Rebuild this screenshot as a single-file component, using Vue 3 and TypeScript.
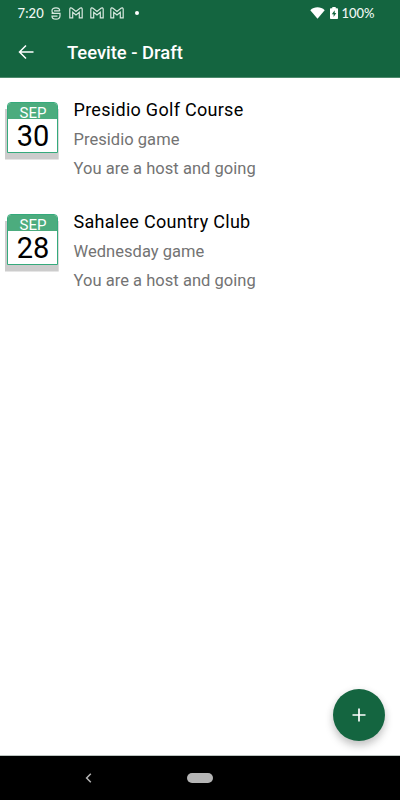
<script setup lang="ts">
interface Invite {
  month: string
  day: number
  course: string
  game: string
  status: string
}

const invites: Invite[] = [
  { month: 'SEP', day: 30, course: 'Presidio Golf Course', game: 'Presidio game', status: 'You are a host and going' },
  { month: 'SEP', day: 28, course: 'Sahalee Country Club', game: 'Wednesday game', status: 'You are a host and going' },
]
</script>

<template>
  <div class="screen">
    <header class="top">
      <div class="status">
        <span class="time">7:20</span>
        <svg class="s-icon" width="10" height="13" viewBox="0 0 10 13">
          <path d="M8.800 3.700C8.600 1.800 7 .8 5 .8S1 1.800 1 3.700 2 6.400 3.500 6.400H9V8.800C9 11 7.300 12.200 5 12.200S1 11 1 9.200H6.500M3 3.800H8.800M.6 6.400H4" />
        </svg>
        <svg v-for="n in 3" :key="n" class="mail" width="14" height="12" viewBox="0 0 14 12">
          <path d="M.8 10.800V2.200C.8.8 2.100.5 3 1.200L7 4.500 11 1.200C11.900.5 13.200.8 13.200 2.200V10.800H10.300V5.300L7 8 3.700 5.300V10.800Z" />
        </svg>
        <span class="dot"></span>
        <span class="grow"></span>
        <svg class="wifi" width="15" height="12" viewBox="0 0 15 12">
          <path d="M.3 3.200C4.300-.6 10.700-.6 14.700 3.200L7.500 11.800Z" />
        </svg>
        <svg class="battery" width="8" height="12" viewBox="0 0 8 12">
          <path class="cell" d="M2.300 0H5.700V1.200H7.200Q8 1.200 8 2V11.200Q8 12 7.200 12H.8Q0 12 0 11.200V2Q0 1.200.8 1.200H2.300Z" />
          <path class="bolt" d="M4.700 3.200L1.800 7.200H3.600V10L6.300 6H4.700Z" />
        </svg>
        <span class="percent">100%</span>
      </div>
      <div class="bar">
        <svg class="back" width="16" height="16" viewBox="0 0 16 16">
          <path d="M15.500 8H1.600M8 1.500L1.500 8 8 14.500" />
        </svg>
        <h1>Teevite - Draft</h1>
      </div>
    </header>

    <main>
      <article v-for="invite in invites" :key="invite.day" class="invite">
        <div class="calendar">
          <div class="sheet">
            <div class="month">{{ invite.month }}</div>
            <div class="day">{{ invite.day }}</div>
          </div>
        </div>
        <div class="details">
          <h2>{{ invite.course }}</h2>
          <p>{{ invite.game }}</p>
          <p>{{ invite.status }}</p>
        </div>
      </article>
    </main>

    <button class="fab" aria-label="Add">
      <svg width="14" height="14" viewBox="0 0 14 14"><path d="M7 .5V13.500M.5 7H13.500" /></svg>
    </button>

    <nav class="system">
      <svg class="prev" width="7" height="10" viewBox="0 0 7 10"><path d="M5.800 .8L1.600 5 5.800 9.200" /></svg>
      <span class="pill"></span>
    </nav>
  </div>
</template>

<style>
body {
  margin: 0;
  background: #fff;
}
</style>

<style scoped>
.screen {
  position: relative;
  display: flex;
  flex-direction: column;
  width: 400px;
  height: 800px;
  overflow: hidden;
  background: #fff;
  font-family: Roboto, "Liberation Sans", sans-serif;
}
.top {
  box-sizing: border-box;
  height: 78px;
  flex: none;
  border-bottom: 1px solid #4d8a6c;
  background: #146540;
  color: #fff;
}
.status {
  display: flex;
  align-items: center;
  box-sizing: border-box;
  height: 26px;
  padding: 0 25.500px 0 17.500px;
  color: #f0f7f3;
}
.time,
.percent {
  font: 500 13px/26px Lato, "Open Sans", sans-serif;
}
.time {
  width: 33px;
  letter-spacing: 0.100px;
}
.s-icon,
.mail {
  fill: none;
  stroke: #d8e8df;
  stroke-width: 1.200;
}
.mail {
  margin-left: 6.500px;
}
.s-icon + .mail {
  margin-left: 8.500px;
}
.dot {
  width: 4px;
  height: 4px;
  margin-left: 11px;
  border-radius: 50%;
  background: #fff;
}
.grow {
  flex: 1;
}
.wifi,
.cell {
  fill: #fff;
}
.battery {
  margin: 0 3px 0 5px;
}
.bolt {
  fill: #146540;
}
.bar {
  display: flex;
  align-items: center;
  height: 52px;
  padding-left: 18px;
}
.back {
  fill: none;
  stroke: #fff;
  stroke-width: 1.500;
}
h1 {
  margin: 1px 0 0 33px;
  font-size: 18.400px;
  line-height: 24px;
  font-weight: 500;
}
main {
  flex: 1;
  padding-top: 17px;
}
.invite {
  display: flex;
  height: 112px;
}
.calendar {
  flex: none;
  box-sizing: border-box;
  width: 54px;
  height: 58px;
  margin: 7px 0 0 5px;
  padding-left: 2.490px;
  background: linear-gradient(#ccc, #ccc) 0 7px / 53.700px 50.500px no-repeat;
}
.sheet {
  box-sizing: border-box;
  width: 51px;
  height: 51px;
  border: 1px solid #35aa7c;
  border-radius: 4px 4px 0 0;
  background: #fff;
  overflow: hidden;
  text-align: center;
}
.month {
  height: 16px;
  padding-top: 2px;
  box-sizing: border-box;
  background: #4cac7e;
  color: #fff;
  font-size: 15px;
  line-height: 16px;
}
.day {
  color: #000;
  font-size: 29px;
  line-height: 34px;
}
.details {
  margin-left: 14.500px;
}
h2,
p {
  margin: 0;
  height: 29px;
  line-height: 29px;
  white-space: nowrap;
}
h2 {
  color: #000;
  font-size: 18px;
  font-weight: 400;
  letter-spacing: 0.290px;
}
p {
  box-sizing: border-box;
  padding-top: 1px;
  color: #737373;
  font-size: 16.500px;
  letter-spacing: 0.040px;
}
.fab {
  position: absolute;
  left: 333px;
  top: 689px;
  display: flex;
  align-items: center;
  justify-content: center;
  width: 52px;
  height: 52px;
  padding: 0;
  border: 0;
  border-radius: 50%;
  background: #146540;
  box-shadow: 0 5px 9px rgba(0, 0, 0, 0.210), 0 1px 8px rgba(0, 0, 0, 0.060);
}
.fab path {
  fill: none;
  stroke: #fff;
  stroke-width: 1.700;
}
.system {
  display: flex;
  align-items: center;
  flex: none;
  box-sizing: border-box;
  height: 45px;
  padding-left: 84.500px;
  border-top: 1px solid #bcc5c1;
  background: #000;
}
.prev {
  fill: none;
  stroke: #b5b5b5;
  stroke-width: 1.500;
}
.pill {
  width: 26px;
  height: 10px;
  margin-left: 95.500px;
  border-radius: 5px;
  background: #b5b5b5;
}
</style>
